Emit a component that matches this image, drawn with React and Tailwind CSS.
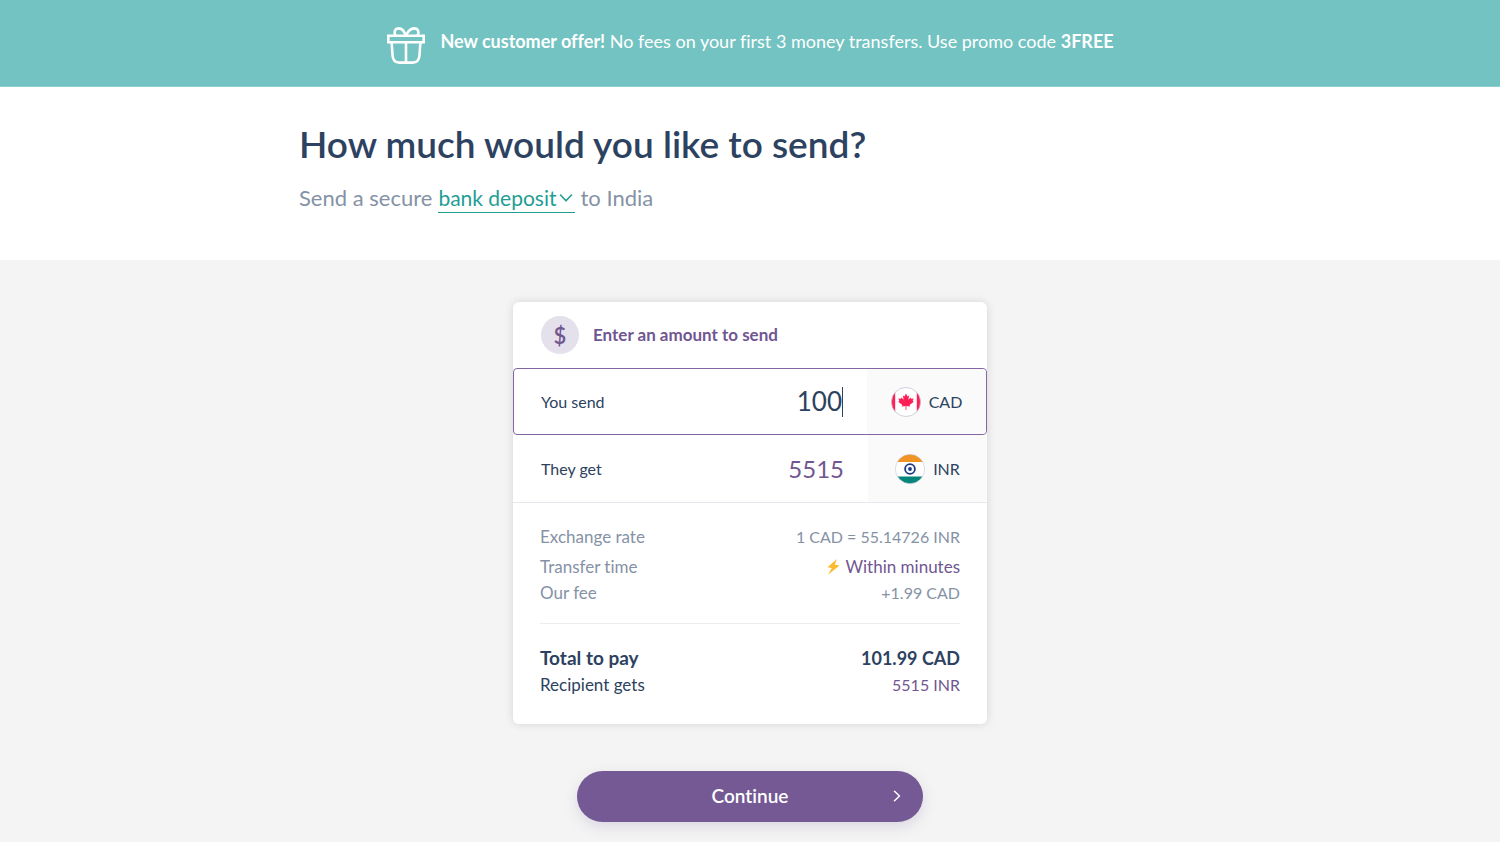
import { useState } from 'react'

const RATE = 55.14726
const FEE = 1.99

function GiftIcon() {
  return (
    <svg className="mt-1 w-10 h-10 flex-shrink-0" viewBox="0 0 40 40" fill="none" stroke="currentColor" strokeWidth="2.6" aria-hidden="true">
      <path d="M2.3 10.8h35.4v6.4H2.3z" />
      <path d="M5.6 17.5l1 13.5c.4 4.3 2.8 6.6 6.8 6.6h13.2c4 0 6.4-2.3 6.8-6.6l1-13.5" />
      <path d="M20 17.5v20" />
      <path d="M9.6 10.5C7.2 6.8 9.4 3.4 12.8 3.4c3.2 0 5.4 2.5 7 7" />
      <path d="M20 10.5c1.8-3.9 4.8-7.1 8.2-7.1 3.8 0 5.6 3.7 3.2 7.1" />
    </svg>
  )
}

function CanadaFlag() {
  return (
    <svg className="w-[30px] h-[30px]" viewBox="0 0 30 30" aria-hidden="true">
      <clipPath id="ca">
        <circle cx="15" cy="15" r="14.5" />
      </clipPath>
      <g clipPath="url(#ca)">
        <path fill="#fff" d="M0 0h30v30H0z" />
        <path fill="#ff1f57" d="M0 0h4.2v30H0zM25.8 0H30v30h-4.2z" />
      </g>
      <circle cx="15" cy="15" r="14.5" fill="none" stroke="#b9bfcc" strokeWidth="0.7" />
      <path
        fill="#ff1f57"
        d="M15 6.6l-1.5 2.8-1.7-.9.9 4.3-2.3-2.2-.5 1.2-2.5-.4.9 2.6-1.1.7 4.2 3.4-.5 1.4 3.7-.5v3.9h.8v-3.9l3.7.5-.5-1.4 4.2-3.4-1.1-.7.9-2.6-2.5.4-.5-1.2-2.3 2.2.9-4.3-1.7.9z"
      />
    </svg>
  )
}

function IndiaFlag() {
  return (
    <svg className="w-[30px] h-[30px]" viewBox="0 0 30 30" aria-hidden="true">
      <clipPath id="in">
        <circle cx="15" cy="15" r="14.5" />
      </clipPath>
      <g clipPath="url(#in)">
        <path fill="#fff" d="M0 0h30v30H0z" />
        <path fill="#f29423" d="M0 0h30v8H0z" />
        <path fill="#06857a" d="M0 22.5h30V30H0z" />
      </g>
      <circle cx="15" cy="15" r="14.6" fill="none" stroke="#b9bfcc" strokeWidth="0.5" />
      <circle cx="15" cy="15" r="4.9" fill="none" stroke="#1c3a85" strokeWidth="1.8" />
      <circle cx="15" cy="15" r="1.9" fill="#1c3a85" />
    </svg>
  )
}

function Bolt() {
  return (
    <svg className="w-4 h-4" viewBox="0 0 16 16" aria-hidden="true">
      <path fill="#fdb92c" d="M12 0L2.5 8.2l4.3.7L3 15.8l11.5-9.3-4.8-.8z" />
    </svg>
  )
}

function AmountRow({ id, label, value, onChange, active, currency, flag }) {
  return (
    <div
      className={`flex items-stretch ${
        active ? 'h-[67px] border border-[#8566a5] rounded' : 'h-[68px] border-b border-[#e6e6ec]'
      }`}
    >
      <label htmlFor={id} className={`flex items-center text-base text-[#2c4260] ${active ? 'pl-[27px]' : 'pl-7'}`}>
        {label}
      </label>
      <div className="flex-1 min-w-0 flex items-center justify-end pr-6">
        <input
          id={id}
          value={value}
          onChange={onChange}
          inputMode="decimal"
          className={`w-40 h-[30px] text-right bg-transparent outline-none ${
            active ? 'text-[26px] text-[#2c4260] border-r border-[#2c4260]' : 'text-2xl text-[#715691]'
          }`}
        />
      </div>
      <button
        type="button"
        className="w-[119px] bg-[#fafafa] flex items-center justify-center gap-2 text-base text-[#2c4260] rounded-r"
      >
        {flag}
        {currency}
      </button>
    </div>
  )
}

function Detail({ label, children, className = '', valueClass = '' }) {
  return (
    <div className={`flex items-center justify-between ${className}`}>
      <dt>{label}</dt>
      <dd className={`flex items-center gap-1 ${valueClass}`}>{children}</dd>
    </div>
  )
}

export default function App() {
  const [amount, setAmount] = useState('100')
  const sent = Number(amount) || 0
  const received = Math.round(sent * RATE)

  return (
    <div className="min-h-screen flex flex-col bg-[#f4f4f4] font-['Lato',sans-serif] [font-variant-ligatures:none]">
      <div className="h-[87px] flex items-center justify-center gap-[14px] bg-[#73c3c2] border-b border-[#8fcfce] text-white">
        <GiftIcon />
        <p className="text-lg leading-6 pb-1">
          <strong className="font-bold">New customer offer!</strong> No fees on your first 3 money transfers. Use promo code{' '}
          <strong className="font-bold">3FREE</strong>
        </p>
      </div>

      <header className="bg-white pt-[34px] pb-[47px]">
        <div className="max-w-[902px] mx-auto">
          <h1 className="text-[37px] leading-[46px] font-semibold text-[#2c4260]">How much would you like to send?</h1>
          <div className="mt-4 flex items-baseline gap-[6px] text-[22px] leading-7 text-[#8592a6]">
            <span>Send a secure</span>
            <span className="relative inline-flex border-b border-[#1f9e94] text-[#1f9e94]">
              <select
                aria-label="Delivery method"
                className="appearance-none field-sizing-content bg-transparent outline-none pr-[18px] text-[21px] leading-[29px]"
              >
                <option>bank deposit</option>
              </select>
              <svg
                className="absolute right-0.5 top-2 w-[14px] h-[14px] pointer-events-none"
                viewBox="0 0 14 14"
                fill="none"
                stroke="currentColor"
                strokeWidth="1.6"
                strokeLinecap="round"
                strokeLinejoin="round"
                aria-hidden="true"
              >
                <path d="M1.5 4L7 9.8 12.5 4" />
              </svg>
            </span>
            <span>to India</span>
          </div>
        </div>
      </header>

      <main className="flex-1 flex flex-col items-center pt-[42px] pb-5">
        <section className="w-full max-w-[474px] bg-white rounded-md shadow-[0_0_10px_rgba(0,0,0,0.13)]">
          <div className="h-[66px] flex items-center gap-[14px] pl-7">
            <span className="w-[38px] h-[38px] rounded-full bg-[#e4e0ec] flex items-center justify-center text-[22px] font-semibold text-[#715691]">
              $
            </span>
            <h2 className="text-[17px] font-bold text-[#715691]">Enter an amount to send</h2>
          </div>

          <AmountRow
            id="send"
            label="You send"
            value={amount}
            onChange={(e) => setAmount(e.target.value)}
            active
            currency="CAD"
            flag={<CanadaFlag />}
          />
          <AmountRow
            id="receive"
            label="They get"
            value={received}
            onChange={(e) => setAmount(String(+(Number(e.target.value) / RATE).toFixed(2)))}
            currency="INR"
            flag={<IndiaFlag />}
          />

          <dl className="px-[27px] pt-[21px] pb-[26px] text-[17px] leading-[26px] text-[#8592a6]">
            <Detail label="Exchange rate" valueClass="text-base">1 CAD = {RATE} INR</Detail>
            <Detail label="Transfer time" className="mt-1" valueClass="text-[#715691]">
              <Bolt />
              Within minutes
            </Detail>
            <Detail label="Our fee" valueClass="text-base">+{FEE} CAD</Detail>
            <Detail
              label="Total to pay"
              className="mt-[17px] pt-5 border-t border-[#ececef] text-[19px] font-bold text-[#2c4260]"
              valueClass="text-lg"
            >
              {(sent + FEE).toFixed(2)} CAD
            </Detail>
            <Detail label="Recipient gets" className="text-[#2c4260]" valueClass="text-base text-[#715691]">
              {received} INR
            </Detail>
          </dl>
        </section>

        <button
          type="button"
          className="relative mt-[47px] w-full max-w-[346px] h-[51px] rounded-full bg-[#745994] text-white text-[19px] font-semibold shadow-[0_5px_14px_rgba(113,86,145,0.18)]"
        >
          Continue
          <svg
            className="absolute right-5 top-[19px] w-3 h-3"
            viewBox="0 0 12 12"
            fill="none"
            stroke="currentColor"
            strokeWidth="1.5"
            strokeLinecap="round"
            strokeLinejoin="round"
            aria-hidden="true"
          >
            <path d="M3.5 1.2L8.5 6l-5 4.8" />
          </svg>
        </button>
      </main>
    </div>
  )
}
